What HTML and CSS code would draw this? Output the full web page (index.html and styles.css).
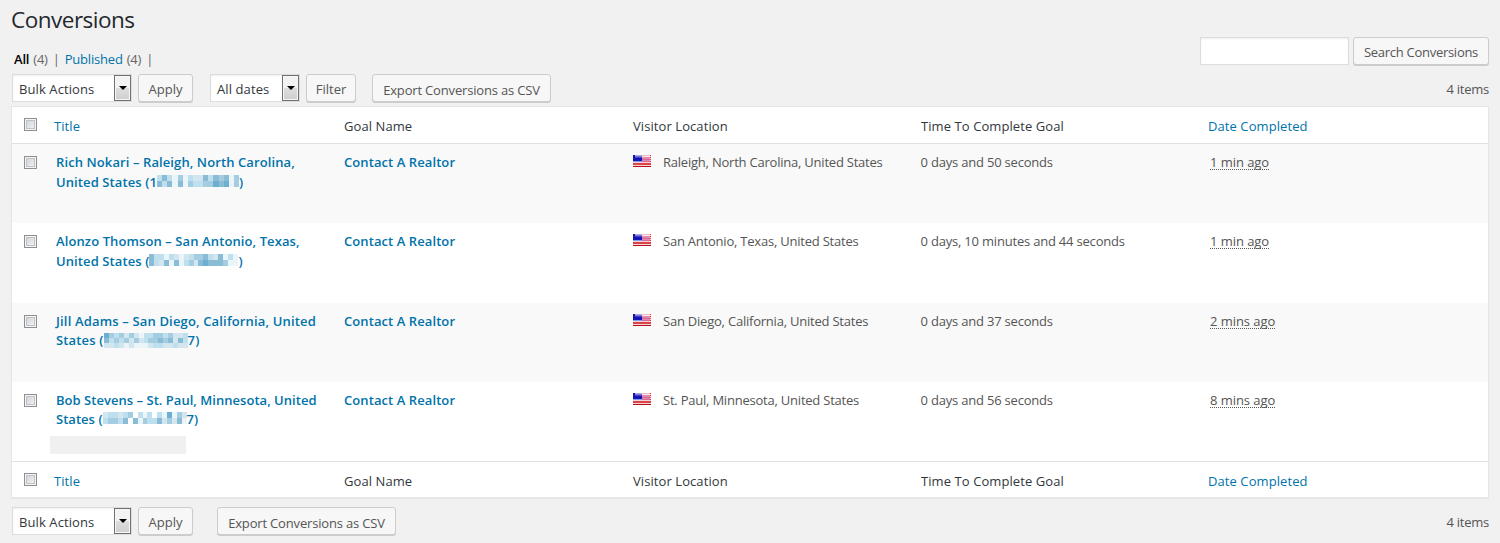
FILE: index.html
```
<!DOCTYPE html>
<html lang="en">
<head>
<meta charset="utf-8">
<title>Conversions</title>
<link rel="stylesheet" href="styles.css">
</head>
<body>
<svg class="defs" width="0" height="0" aria-hidden="true">
  <defs>
    <linearGradient id="gloss" x1="0" y1="0" x2="0" y2="1"><stop offset="0" stop-color="#fff" stop-opacity=".75"/><stop offset="1" stop-color="#fff" stop-opacity=".1"/></linearGradient>
    <symbol id="flag" viewBox="0 0 18 12">
      <rect width="18" height="12" fill="#f3d5d8"/>
      <path d="M0 .5h18M0 2.5h18M0 4.5h18M0 6.5h18M0 8.5h18" stroke="#dd4248"/>
      <path d="M0 11.5h18" stroke="#b5121b"/>
      <path d="M0 9.5h18" stroke="#dd4248"/>
      <rect x="9" y="2" width="8" height="5" fill="#d874a8" opacity=".8"/>
      <rect width="9" height="6" fill="#1414b4"/>
      <rect y="6" width="9" height="1" fill="#7d9ff0"/>
      <rect x="2" width="15" height="3" fill="url(#gloss)"/>
    </symbol>
  </defs>
</svg>
<main class="page">
  <header class="top">
    <div>
      <h1 class="heading">Conversions</h1>
      <div class="views"><b>All</b> <span>(4)</span><i>|</i><a>Published</a> <span>(4)</span><i>|</i></div>
    </div>
    <div class="search"><input class="search-box" type="text" aria-label="Search"><button class="button search-button">Search Conversions</button></div>
  </header>
  <div class="nav">
    <div class="select bulk"><span>Bulk Actions</span><em></em></div>
    <button class="button apply">Apply</button>
    <div class="select dates"><span>All dates</span><em></em></div>
    <button class="button filter">Filter</button>
    <button class="button export">Export Conversions as CSV</button>
    <span class="count">4 items</span>
  </div>
  <section class="table">
    <div class="row head"><span class="check"></span><a>Title</a><span>Goal Name</span><span>Visitor Location</span><span>Time To Complete Goal</span><a>Date Completed</a></div>
    <div class="row item odd"><span class="check"></span>
      <div class="name">Rich Nokari – Raleigh, North Carolina,<br>United States (1<span class="ip ip1"><svg class="mosaic" data-cells="3531413225354514/5351514334465614"></svg></span>)</div>
      <div class="goal">Contact A Realtor</div>
      <div class="place"><svg class="flag"><use href="#flag"/></svg><span>Raleigh, North Carolina, United States</span></div>
      <div class="time">0 days and 50 seconds</div><div class="date"><abbr>1 min ago</abbr></div></div>
    <div class="row item"><span class="check"></span>
      <div class="name">Alonzo Thomson – San Antonio, Texas,<br>United States (<span class="ip ip2"><svg class="mosaic" data-cells="533132123445325131/532515134256555411"></svg></span>)</div>
      <div class="goal">Contact A Realtor</div>
      <div class="place"><svg class="flag"><use href="#flag"/></svg><span>San Antonio, Texas, United States</span></div>
      <div class="time">0 days, 10 minutes and 44 seconds</div><div class="date"><abbr>1 min ago</abbr></div></div>
    <div class="row item odd"><span class="check"></span>
      <div class="name wide">Jill Adams – San Diego, California, United<br>States (<span class="ip ip3"><svg class="mosaic three" data-cells="64342421334434223/53434242344545253/22321211123322322"></svg></span>7)</div>
      <div class="goal">Contact A Realtor</div>
      <div class="place"><svg class="flag"><use href="#flag"/></svg><span>San Diego, California, United States</span></div>
      <div class="time">0 days and 37 seconds</div><div class="date"><abbr>2 mins ago</abbr></div></div>
    <div class="row item"><span class="check"></span>
      <div class="name tight">Bob Stevens – St. Paul, Minnesota, United<br>States (<span class="ip ip4"><svg class="mosaic" data-cells="23323403130316142/34435051433524251"></svg></span>7)<span class="blank"></span></div>
      <div class="goal">Contact A Realtor</div>
      <div class="place"><svg class="flag"><use href="#flag"/></svg><span>St. Paul, Minnesota, United States</span></div>
      <div class="time">0 days and 56 seconds</div><div class="date"><abbr>8 mins ago</abbr></div></div>
    <div class="row head foot"><span class="check"></span><a>Title</a><span>Goal Name</span><span>Visitor Location</span><span>Time To Complete Goal</span><a>Date Completed</a></div>
  </section>
  <div class="nav bottom">
    <div class="select bulk"><span>Bulk Actions</span><em></em></div>
    <button class="button apply">Apply</button>
    <button class="button export">Export Conversions as CSV</button>
    <span class="count">4 items</span>
  </div>
</main>
<script src="app.js"></script>
</body>
</html>
```

FILE: styles.css
```
* { box-sizing: border-box; }
body { margin: 0; background: #f1f1f1; color: #555; font: 13px/19.5px "Open Sans", "Noto Sans", sans-serif; }
.defs { position: absolute; }
.page { height: 543px; padding: 0 11px; overflow: hidden; }
.top { height: 74px; display: flex; justify-content: space-between; }
.heading { margin: 6px 0 0; color: #23282d; font-size: 22.5px; font-weight: 400; line-height: 28px; letter-spacing: -.5px; }
.views { display: flex; gap: 4px; margin: 16px 0 0 3px; white-space: nowrap; color: #666; letter-spacing: -.2px; }
.views b { color: #000; font-weight: 600; }
.views i { font-style: normal; margin: 0 1px; }
a { color: #0073aa; }
.search { display: flex; gap: 4px; padding-top: 37px; }
.search-box { width: 149px; height: 28px; border: 1px solid #ddd; background: #fff; box-shadow: inset 0 1px 2px rgba(0,0,0,.07); padding: 3px; }
.button { height: 28px; margin: 0; padding: 1px 0 0; border: 1px solid #ccc; border-radius: 3px; background: #f7f7f7; box-shadow: 0 1px 0 #ccc; color: #555; font: 13px/24px "Open Sans", sans-serif; white-space: nowrap; }
.search-button { width: 136px; letter-spacing: -.28px; }
.nav { display: flex; height: 32px; padding-left: 1px; }
.select { display: flex; height: 28px; border: 1px solid #ddd; background: #fff; color: #32373c; box-shadow: inset 0 1px 2px rgba(0,0,0,.07); line-height: 28px; padding-left: 6px; justify-content: space-between; white-space: nowrap; letter-spacing: .1px; }
.select em { width: 17px; height: 26px; border: 1px solid #707070; background: linear-gradient(#f3f3f3 0 48%, #ddd 50%, #cfcfcf); box-shadow: inset 0 0 0 1px #f7f7f7; display: flex; justify-content: center; align-items: center; }
.select em::after { content: ""; border: 4px solid transparent; border-top-color: #000; border-bottom: 0; }
.bulk { width: 120px; }
.apply { width: 55px; margin-left: 6px; }
.dates { width: 90px; margin-left: 17px; }
.filter { width: 50px; margin-left: 6px; }
.export { width: 179px; margin-left: 16px; padding-top: 3px; letter-spacing: -.17px; }
.count { margin-left: auto; line-height: 31px; letter-spacing: -.25px; }
.table { border: 1px solid #e5e5e5; background: #fff; height: 392px; display: flex; flex-direction: column; box-shadow: 0 1px 1px rgba(0,0,0,.04); }
.row { display: grid; grid-template-columns: 42px 290px 289px 288px 287px 1fr; }
.head { flex: none; height: 37px; border-bottom: 1px solid #e1e1e1; color: #32373c; line-height: 38px; letter-spacing: .08px; }
.foot { height: 36px; border-top: 1px solid #e1e1e1; border-bottom: 0; }
.item { flex: 1; padding-top: 9px; }
.odd { background: #f9f9f9; }
.check { width: 13px; height: 13px; margin: 11px 0 0 12px; border: 1px solid #8e8f8f; background: linear-gradient(135deg, #cbcfd5, #f6f6f6); box-shadow: inset 0 0 0 1px #f4f4f4, inset 0 0 0 2px #bfc3c9; }
.item .check { margin-top: 3px; }
.name { padding-left: 2px; color: #0073aa; font-weight: 600; white-space: nowrap; position: relative; letter-spacing: .1px; }
.wide { letter-spacing: .16px; }
.tight { letter-spacing: .03px; }
.goal { color: #0073aa; font-weight: 600; letter-spacing: .08px; }
.place { display: flex; gap: 12px; white-space: nowrap; letter-spacing: -.22px; }
.time { letter-spacing: -.2px; margin-left: -.5px; }
.flag { width: 18px; height: 12px; margin-top: 2px; }
.date { padding-left: 2px; letter-spacing: -.05px; }
abbr { border-bottom: 1px dotted #555; line-height: 14px; display: inline-block; }
.ip { display: inline-flex; height: 14px; vertical-align: top; padding-top: 2px; }
.ip1 { width: 82px; }
.ip2 { width: 89px; }
.ip3 { width: 84px; }
.ip4 { width: 84px; }
.mosaic { width: 100%; height: 12px; flex: none; }
.three { height: 15px; }
.blank { position: absolute; left: -4px; top: 45px; width: 136px; height: 18px; background: #f0f0f0; }
.bottom { padding-top: 9px; height: 45px; }
.bottom .export { margin-left: 24px; }
```

FILE: app.js
```
// Paints each masked address as a grid of tinted blocks.
const tints = ['#ffffff', '#eaf5f9', '#d3e5ee', '#bedfed', '#a4cde2', '#8bbcd5', '#6cafd0'];
document.querySelectorAll('.mosaic').forEach(svg => {
  const rows = svg.dataset.cells.split('/');
  svg.setAttribute('viewBox', `0 0 ${rows[0].length} ${rows.length}`);
  svg.setAttribute('preserveAspectRatio', 'none');
  svg.setAttribute('shape-rendering', 'crispEdges');
  svg.innerHTML = rows.map((row, y) => [...row].map((c, x) =>
    `<rect x="${x}" y="${y}" width="1" height="1" fill="${tints[c]}"/>`).join('')).join('');
});
```
